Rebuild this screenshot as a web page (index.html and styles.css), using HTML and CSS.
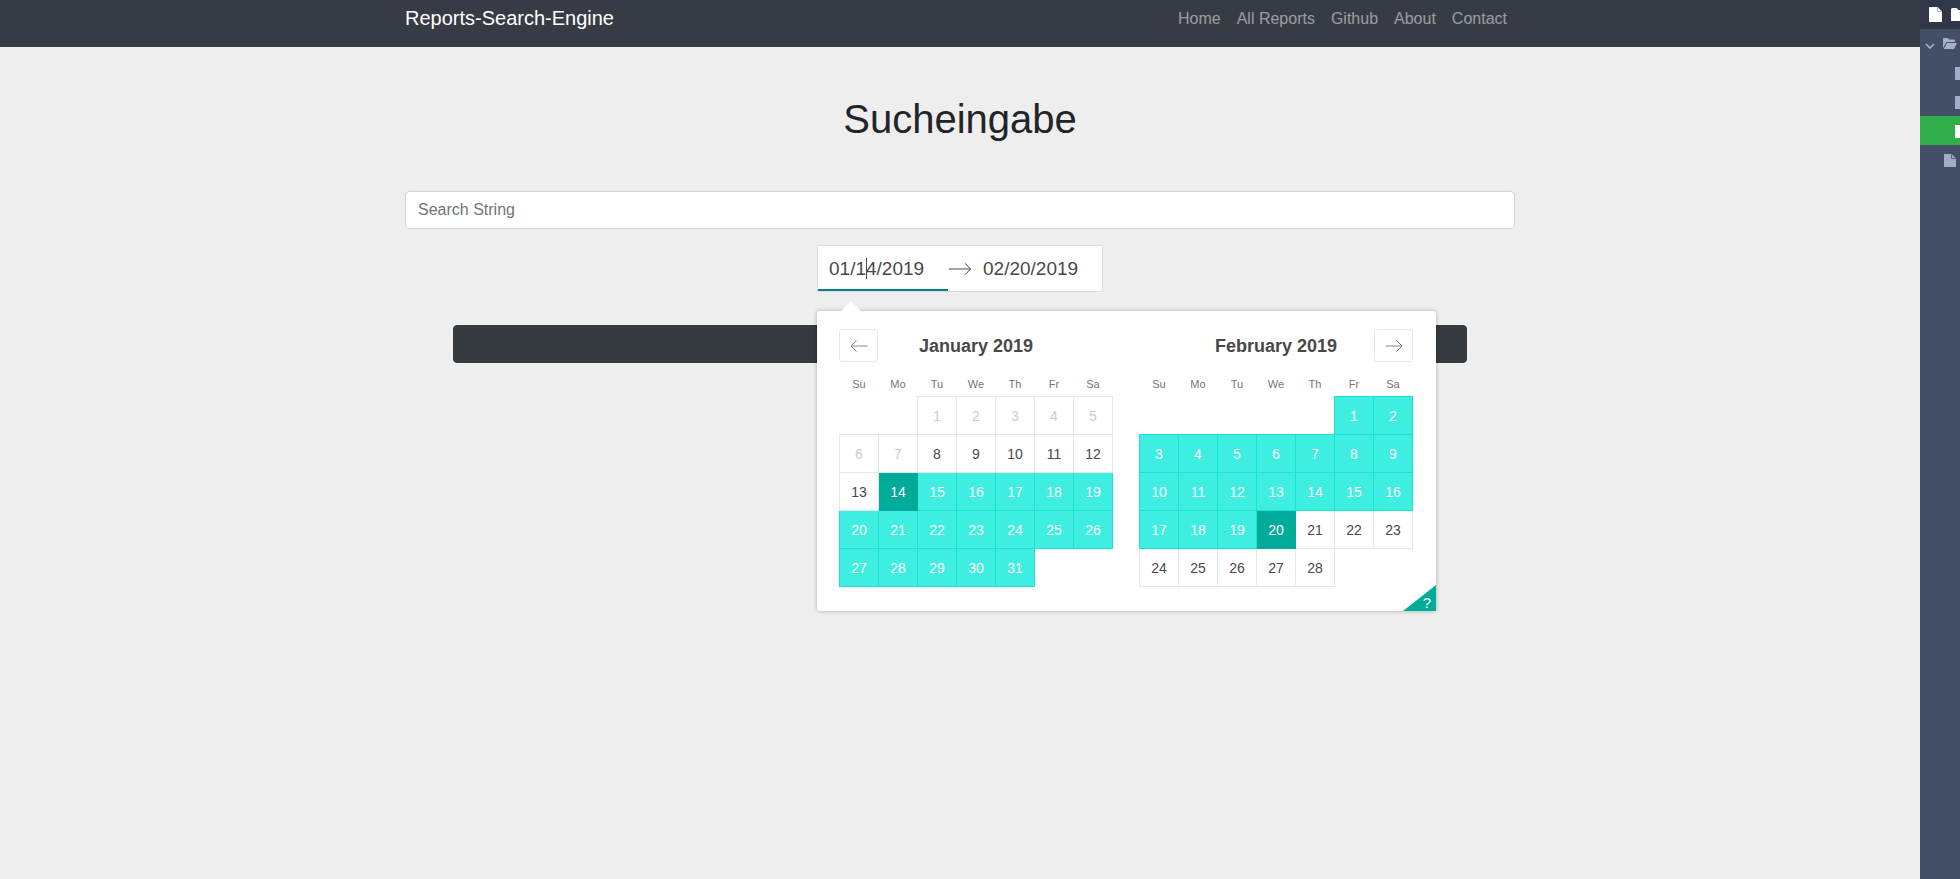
FILE: index.html
```html
<!DOCTYPE html>
<html lang="de">
<head>
<meta charset="utf-8">
<title>Reports-Search-Engine</title>
<link rel="stylesheet" href="styles.css">
</head>
<body>
<div class="page">
  <main class="main">
    <nav class="navbar">
      <div class="container nav-inner">
        <a class="brand">Reports-Search-Engine</a>
        <ul class="nav-links">
          <li>Home</li><li>All Reports</li><li>Github</li><li>About</li><li>Contact</li>
        </ul>
      </div>
    </nav>
    <div class="container content">
      <h1 class="title">Sucheingabe</h1>
      <input class="search" type="text" placeholder="Search String">
      <div class="range-row">
        <div class="range">
          <div class="range-field range-start">01/1<span class="caret"></span>4/2019</div>
          <svg class="range-arrow" width="24" height="24" viewBox="0 0 24 24"><path d="M1 12h21.500M17 6.200l5.500 5.800-5.500 5.800" fill="none" stroke="#484848" stroke-width="1"/></svg>
          <div class="range-field range-end">02/20/2019</div>
          <div class="picker">
            <span class="picker-tip"></span>
            <div class="months">
              <section class="month">
                <header class="month-head">
                  <button class="nav-btn"><svg width="18" height="12" viewBox="0 0 18 12"><path d="M17.500 6H1M6.500.5 1 6l5.500 5.500" fill="none" stroke="#82888a" stroke-width="1"/></svg></button>
                  <strong class="month-name">January 2019</strong>
                  <span></span>
                </header>
                <table class="cal">
                  <thead><tr><th>Su</th><th>Mo</th><th>Tu</th><th>We</th><th>Th</th><th>Fr</th><th>Sa</th></tr></thead>
                  <tbody>
                    <tr><td class="e"></td><td class="e"></td><td class="b">1</td><td class="b">2</td><td class="b">3</td><td class="b">4</td><td class="b">5</td></tr>
                    <tr><td class="b">6</td><td class="b">7</td><td>8</td><td>9</td><td>10</td><td>11</td><td>12</td></tr>
                    <tr><td>13</td><td class="s">14</td><td class="r">15</td><td class="r">16</td><td class="r">17</td><td class="r">18</td><td class="r">19</td></tr>
                    <tr><td class="r">20</td><td class="r">21</td><td class="r">22</td><td class="r">23</td><td class="r">24</td><td class="r">25</td><td class="r">26</td></tr>
                    <tr><td class="r">27</td><td class="r">28</td><td class="r">29</td><td class="r">30</td><td class="r">31</td><td class="e"></td><td class="e"></td></tr>
                  </tbody>
                </table>
              </section>
              <section class="month">
                <header class="month-head">
                  <span></span>
                  <strong class="month-name">February 2019</strong>
                  <button class="nav-btn"><svg width="18" height="12" viewBox="0 0 18 12"><path d="M.5 6H17M11.500.5 17 6l-5.500 5.500" fill="none" stroke="#82888a" stroke-width="1"/></svg></button>
                </header>
                <table class="cal">
                  <thead><tr><th>Su</th><th>Mo</th><th>Tu</th><th>We</th><th>Th</th><th>Fr</th><th>Sa</th></tr></thead>
                  <tbody>
                    <tr><td class="e"></td><td class="e"></td><td class="e"></td><td class="e"></td><td class="e"></td><td class="r">1</td><td class="r">2</td></tr>
                    <tr><td class="r">3</td><td class="r">4</td><td class="r">5</td><td class="r">6</td><td class="r">7</td><td class="r">8</td><td class="r">9</td></tr>
                    <tr><td class="r">10</td><td class="r">11</td><td class="r">12</td><td class="r">13</td><td class="r">14</td><td class="r">15</td><td class="r">16</td></tr>
                    <tr><td class="r">17</td><td class="r">18</td><td class="r">19</td><td class="s">20</td><td>21</td><td>22</td><td>23</td></tr>
                    <tr><td>24</td><td>25</td><td>26</td><td>27</td><td>28</td><td class="e"></td><td class="e"></td></tr>
                  </tbody>
                </table>
              </section>
            </div>
            <span class="corner"><span class="corner-q">?</span></span>
          </div>
        </div>
      </div>
      <div class="submit"></div>
    </div>
  </main>
  <aside class="side">
    <div class="side-top">
      <svg class="ic" width="13" height="15" viewBox="0 0 13 15"><path d="M0 0h8.500L13 4.500V15H0z" fill="#fff"/><path d="M8.500 .5v4h4" fill="none" stroke="#8b93b8" stroke-width=".8"/></svg>
      <svg class="ic" width="16" height="13" viewBox="0 0 16 13"><path d="M0 1.500Q0 0 1.500 0h4l2 2h7Q16 2 16 3.500V13H0z" fill="#fff"/></svg>
    </div>
    <div class="side-row r-folder">
      <svg class="chev" width="10" height="7" viewBox="0 0 10 7"><path d="M1 1l4 4 4-4" fill="none" stroke="#a3b0d0" stroke-width="1.600"/></svg>
      <svg width="14" height="11" viewBox="0 0 14 11"><path d="M0 10V1q0-1 1-1h3.500l1.500 1.500h5q1 0 1 1V4H3.500z" fill="#a9b0c6"/><path d="M.8 11 4 5h10l-3 6z" fill="#a9b0c6"/></svg>
    </div>
    <div class="side-row r-file"><span class="sq"></span></div>
    <div class="side-row r-file"><span class="sq"></span></div>
    <div class="side-row r-file active"><span class="sq"></span></div>
    <div class="side-row r-doc">
      <svg width="12" height="13" viewBox="0 0 12 13"><path d="M0 0h7.500L12 4.500V13H0z" fill="#a4abc6"/><path d="M7.500 .5v4h4" fill="none" stroke="#434f66" stroke-width=".8"/></svg>
    </div>
  </aside>
</div>
</body>
</html>
```

FILE: styles.css
```css
* { box-sizing: border-box; }
html, body { margin: 0; height: 100%; }
body { font-family: "Liberation Sans", Arial, sans-serif; font-size: 16px; color: #212529; background: #eee; overflow: hidden; }
.page { display: flex; height: 879px; }
.main { flex: 1; min-width: 0; }
.container { width: 1140px; margin: 0 auto; padding: 0 15px; }

.navbar { height: 47px; background: #373c44; }
.nav-inner { display: flex; justify-content: space-between; align-items: center; height: 37px; }
.brand { font-size: 20px; color: #fff; }
.nav-links { display: flex; list-style: none; margin: 0; padding: 0; }
.nav-links li { padding: 0 8px; color: rgba(255,255,255,.5); line-height: 24px; }

.content { display: flex; flex-direction: column; align-items: center; }
.title { margin: 48px 0 48px; font-size: 40px; font-weight: 500; line-height: 48px; text-align: center; color: #212529; }
.search { display: block; width: 100%; height: 38px; padding: 6px 12px; border: 1px solid #ced4da; border-radius: 4px; background: #fff; font: inherit; color: #495057; }
.search::placeholder { color: #6c757d; opacity: 1; }

.range-row { margin-top: 16px; }
.range { position: relative; display: flex; align-items: center; width: 286px; height: 47px; background: #fff; border: 1px solid #dbdbdb; border-radius: 2px; }
.range-field { font-size: 19px; line-height: 24px; color: #484848; white-space: nowrap; }
.range-start { position: relative; align-self: stretch; width: 130px; padding: 11px 0 0 11px; border-bottom: 2px solid #008489; }
.range-end { padding-left: 11px; }
.range-arrow { flex: none; }
.caret { display: inline-block; width: 1px; height: 21px; margin-right: -1px; vertical-align: -4px; background: #484848; }

.picker { position: absolute; left: -1px; top: 65px; z-index: 2; width: 619px; height: 300px; padding: 18px 22px 0; background: #fff; border-radius: 3px; box-shadow: 0 0 4px rgba(0,0,0,.28); }
.picker-tip { position: absolute; left: 24px; top: -10px; width: 0; height: 0; border-left: 10px solid transparent; border-right: 10px solid transparent; border-bottom: 10px solid #fff; }
.months { display: flex; gap: 26px; }
.month { width: 274px; }
.month-head { display: grid; grid-template-columns: 39px 1fr 39px; align-items: center; height: 33px; margin-bottom: 16px; }
.month-name { font-size: 18px; line-height: 24px; color: #484848; text-align: center; }
.nav-btn { display: flex; align-items: center; justify-content: center; width: 39px; height: 33px; padding: 0; background: #fff; border: 1px solid #e4e7e7; border-radius: 3px; }

.cal { border-collapse: collapse; table-layout: fixed; width: 274px; font-size: 14px; color: #484848; }
.cal th { height: 18px; padding: 0 0 5px; font-size: 11px; font-weight: 400; line-height: 13px; color: #757575; text-align: center; }
.cal td { width: 39px; height: 38px; padding: 0; border: 1px solid #e4e7e7; text-align: center; vertical-align: middle; }
.cal td.e { border: 0; }
.cal td.b { color: #cacccd; }
.cal td.r { background: #3eeee0; border-color: #19e3d2; color: #fff; }
.cal td.s { background: #00ab9a; border-color: #00ab9a; color: #fff; }

.corner { position: absolute; right: 0; bottom: 0; width: 33px; height: 26px; background: #00ab9a; clip-path: polygon(100% 0, 100% 100%, 0 100%); }
.corner-q { position: absolute; right: 5px; bottom: 0; font-size: 15px; line-height: 16px; color: #fff; }

.submit { width: 1014px; height: 38px; margin-top: 33px; background: #343a40; border: 1px solid #343a40; border-radius: 4px; }

.side { flex: none; width: 40px; overflow: hidden; background: #434f66; }
.side-top { display: flex; align-items: center; gap: 9px; height: 29px; padding-left: 9px; background: #2f3748; }
.ic { flex: none; }
.side-row { display: flex; align-items: center; height: 29px; }
.r-folder { gap: 8px; padding-left: 5px; }
.chev { margin-top: 5px; }
.r-file { padding: 2px 0 0 35px; }
.r-doc { padding: 2px 0 0 24px; }
.sq { display: block; flex: none; width: 10px; height: 13px; background: #a4abc6; }
.active { background: #2fae4a; }
.active .sq { background: #fff; }
```
